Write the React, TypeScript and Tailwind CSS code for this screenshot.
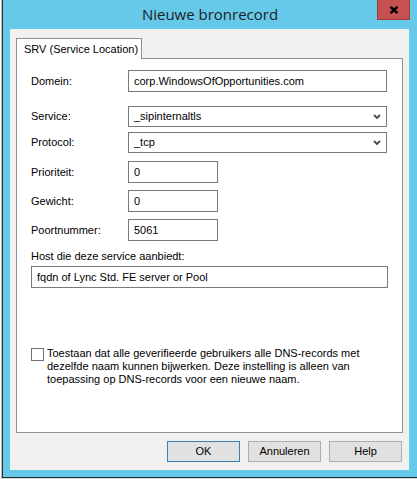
const FONT = { fontFamily: '"Liberation Sans", Arial, sans-serif' };

function TextBox({ value, className = "" }: { value: string; className?: string }) {
  return (
    <div className={`h-[22px] bg-white border border-[#7a7a7a] flex items-center pl-[5px] text-[11px] text-black ${className}`}>
      {value}
    </div>
  );
}

function SelectBox({ value }: { value: string }) {
  return (
    <div className="h-[21px] w-[259px] bg-white border border-[#7a7a7a] flex items-center justify-between pl-[5px] pr-[5px] text-[11px] text-black">
      <span>{value}</span>
      <svg width="8" height="6" viewBox="0 0 8 6">
        <polyline points="1,1 4,4 7,1" fill="none" stroke="#4a4a4a" strokeWidth="1.8" />
      </svg>
    </div>
  );
}

function Row({ label, children, className = "" }: { label: string; children: React.ReactNode; className?: string }) {
  return (
    <div className={`flex items-center ${className}`}>
      <span className="w-[97px] shrink-0">{label}</span>
      {children}
    </div>
  );
}

function Button({ label, isDefault }: { label: string; isDefault?: boolean }) {
  return (
    <div
      className={`w-[73px] h-[21px] flex items-center justify-center bg-[#e1e1e1] border text-[11px] text-black ${
        isDefault ? "border-[#3c7fb1]" : "border-[#adadad]"
      }`}
    >
      {label}
    </div>
  );
}

export default function App() {
  return (
    <div className="w-[417px] h-[479px] overflow-hidden bg-[#d9d9d9] flex flex-col" style={FONT}>
      <div className="flex h-[478px]">
        {/* window behind */}
        <div className="w-[3px] bg-white border-r border-[#b9b9b9]" />

        {/* dialog */}
        <div className="flex-1 flex flex-col bg-[#66c9ea] border-l border-b border-[#2e2e2e]">
          {/* title bar */}
          <div className="h-[29px] relative flex items-center justify-center">
            <span className="text-[15px] text-[#1e1e1e] -mt-[1px]" style={{ fontFamily: '"Open Sans", "Noto Sans", sans-serif' }}>
              Nieuwe bronrecord
            </span>
            <div className="absolute right-[7px] top-0 w-[33px] h-[20px] bg-[#c75050] border border-t-0 border-[#9e3b3b] flex items-center justify-center">
              <svg width="10" height="8" viewBox="0 0 10 8">
                <path d="M1.5 0.8 L8.5 7.2 M8.5 0.8 L1.5 7.2" stroke="#000" strokeWidth="2.4" />
              </svg>
            </div>
          </div>

          {/* client area */}
          <div className="flex-1 ml-[7px] mr-[8px] mb-[7px] bg-[#f0f0f0] flex flex-col px-[6px] pt-[9px]">
            {/* tab */}
            <div className="flex">
              <div className="h-[21px] w-[126px] bg-white border border-b-0 border-[#8d9199] flex items-center pl-[7px] text-[11px] text-black whitespace-nowrap -mb-px relative z-10">
                SRV (Service Location)
              </div>
            </div>

            {/* tab panel */}
            <div className="h-[375px] bg-white border border-[#8d9199] px-[14px] pt-[11px] text-[11px] text-black">
              <Row label="Domein:">
                <TextBox value="corp.WindowsOfOpportunities.com" className="w-[259px]" />
              </Row>
              <Row label="Service:" className="mt-[14px]">
                <SelectBox value="_sipinternaltls" />
              </Row>
              <Row label="Protocol:" className="mt-[5px]">
                <SelectBox value="_tcp" />
              </Row>
              <Row label="Prioriteit:" className="mt-[8px]">
                <TextBox value="0" className="w-[90px]" />
              </Row>
              <Row label="Gewicht:" className="mt-[7px]">
                <TextBox value="0" className="w-[90px]" />
              </Row>
              <Row label="Poortnummer:" className="mt-[7px]">
                <TextBox value="5061" className="w-[90px]" />
              </Row>
              <div className="mt-[9px] leading-[13px]">Host die deze service aanbiedt:</div>
              <TextBox value="fqdn of Lync Std. FE server or Pool" className="w-[357px] mt-[3px] border-[#3a76a8]" />

              <div className="flex items-start mt-[59px]">
                <div className="w-[13px] h-[13px] shrink-0 bg-white border border-[#707070] mt-[1px]" />
                <p className="ml-[3px] leading-[13px]">
                  Toestaan dat alle geverifieerde gebruikers alle DNS-records met
                  <br />
                  dezelfde naam kunnen bijwerken. Deze instelling is alleen van
                  <br />
                  toepassing op DNS-records voor een nieuwe naam.
                </p>
              </div>
            </div>

            {/* buttons */}
            <div className="flex justify-end gap-[8px] mt-[8px] pr-[1px]">
              <Button label="OK" isDefault />
              <Button label="Annuleren" />
              <Button label="Help" />
            </div>
          </div>
        </div>
      </div>
    </div>
  );
}
